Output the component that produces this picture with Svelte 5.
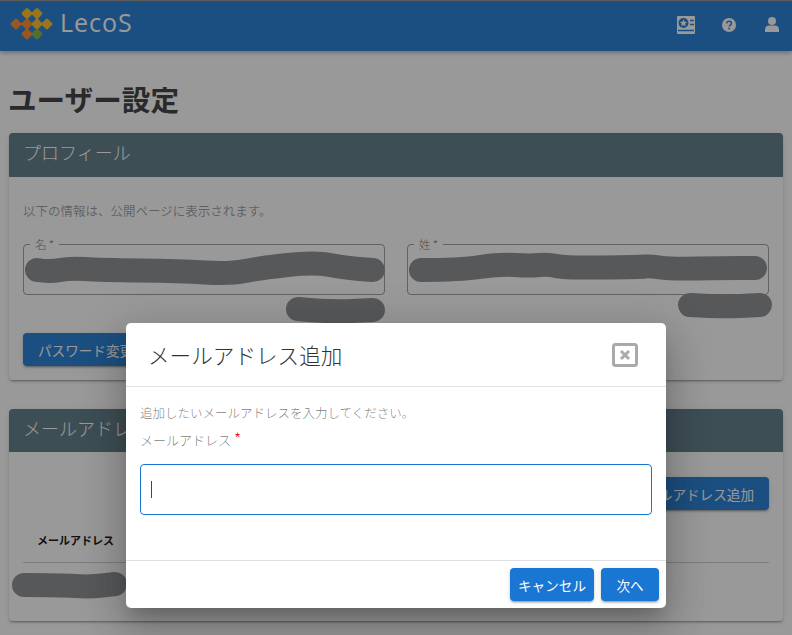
<script>
  let email = $state('');

  const logoDots = [
    { x: 16, y: 23, fill: '#ff8420' },
    { x: 27, y: 23, fill: '#ff8420' },
    { x: 27, y: 33, fill: '#ff8420' },
    { x: 27, y: 12.5, fill: '#ffbc1c' },
    { x: 37, y: 12.5, fill: '#ffbc1c' },
    { x: 37, y: 23, fill: '#ffbc1c' },
    { x: 47, y: 23, fill: '#ffbc1c' },
    { x: 37, y: 33, fill: '#7fb03c' }
  ];

  const scribbles = [
    [[37, 270], [50, 272], [70, 268], [100, 270], [180, 271], [230, 274], [260, 268], [315, 262], [345, 268], [373, 270]],
    [[421, 270], [460, 270], [500, 264], [530, 266], [548, 264], [565, 268], [640, 267], [650, 266], [670, 269], [725, 268], [755, 268]],
    [[298, 309], [330, 312], [373, 310]],
    [[690, 305], [720, 307], [760, 305]],
    [[24, 585], [60, 585], [90, 587], [115, 584]]
  ];

  // rounds the corners of a redaction stroke with midpoint quadratics
  function smooth(pts) {
    let d = `M${pts[0][0]} ${pts[0][1]}`;
    for (let i = 1; i < pts.length - 1; i++) {
      const mx = (pts[i][0] + pts[i + 1][0]) / 2;
      const my = (pts[i][1] + pts[i + 1][1]) / 2;
      d += ` Q${pts[i][0]} ${pts[i][1]} ${mx} ${my}`;
    }
    const last = pts[pts.length - 1];
    return `${d} L${last[0]} ${last[1]}`;
  }
</script>

<div class="page">
  <header class="topbar">
    <div class="brand">
      <svg class="logo" width="56" height="50" viewBox="0 0 56 50">
        <path d="M16 23H27V33" fill="none" stroke="#ff8420" stroke-width="2.5" />
        <path d="M27 12.5H37V23H47" fill="none" stroke="#ffbc1c" stroke-width="2.5" />
        {#each logoDots as d}
          <rect x={d.x - 4.3} y={d.y - 4.3} width="8.6" height="8.6" rx="1.5" fill={d.fill} transform={`rotate(45 ${d.x} ${d.y})`} />
        {/each}
      </svg>
      <span class="brand-name">LecoS</span>
    </div>
    <nav class="nav-icons">
      <svg class="icon-card" width="18" height="18" viewBox="0 0 18 18">
        <rect width="18" height="18" rx="1" fill="#fff" />
        <circle cx="6.5" cy="7" r="5" fill="#1976d2" />
        <path d="M6.5 3.4l1 2.4 2.6.2-2 1.7.6 2.500-2.200-1.300-2.200 1.300.6-2.500-2-1.700 2.600-.2z" fill="#fff" />
        <path d="M13 4.5h4M13 8.5h4M1 14.5h16" stroke="#1976d2" stroke-width="1.3" />
      </svg>
      <svg class="icon-help" width="14" height="14" viewBox="0 0 14 14">
        <circle cx="7" cy="7" r="7" fill="#fff" />
        <path d="M4.7 5.4C4.8 4 5.8 3.2 7.1 3.2c1.3 0 2.3.8 2.3 2 0 1-.6 1.5-1.2 1.9-.6.4-.9.7-.9 1.4" fill="none" stroke="#1976d2" stroke-width="1.6" />
        <circle cx="7.2" cy="10.5" r="1" fill="#1976d2" />
      </svg>
      <svg class="icon-user" width="14" height="15" viewBox="0 0 14 15">
        <circle cx="7" cy="4" r="4" fill="#fff" />
        <path d="M0 15v-2.500C0 10 2 8.500 4 8.500h6c2 0 4 1.500 4 4V15z" fill="#fff" />
      </svg>
    </nav>
  </header>

  <main class="content">
    <h1>ユーザー設定</h1>

    <section class="card profile">
      <h2>プロフィール</h2>
      <div class="card-body">
        <p class="lead">以下の情報は、公開ページに表示されます。</p>
        <div class="fields">
          <fieldset>
            <legend>名 <span class="req">*</span></legend>
          </fieldset>
          <fieldset>
            <legend>姓 <span class="req">*</span></legend>
          </fieldset>
        </div>
        <button class="btn pw">パスワード変更</button>
      </div>
    </section>

    <section class="card mail">
      <h2>メールアドレス</h2>
      <div class="card-body">
        <div class="actions">
          <button class="btn">メールアドレス追加</button>
        </div>
        <div class="table-head">メールアドレス</div>
      </div>
    </section>
  </main>

  <svg class="redactions" width="792" height="635" viewBox="0 0 792 635">
    {#each scribbles as pts}
      <path d={smooth(pts)} fill="none" stroke="#868789" stroke-width="24" stroke-linecap="round" stroke-linejoin="round" />
    {/each}
  </svg>

  <div class="overlay">
    <div class="dialog">
      <div class="dialog-head">
        <span class="dialog-title">メールアドレス追加</span>
        <svg width="26" height="24" viewBox="0 0 26 24">
          <rect x="1.5" y="1.5" width="23" height="21" rx="2" fill="none" stroke="#aaa" stroke-width="3" />
          <path d="M9 8l8 8M17 8l-8 8" stroke="#aaa" stroke-width="3" />
        </svg>
      </div>
      <div class="dialog-body">
        <p class="hint">追加したいメールアドレスを入力してください。</p>
        <label for="email">メールアドレス <span class="star">*</span></label>
        <div class="input-wrap">
          <input id="email" type="text" bind:value={email} />
          <span class="caret"></span>
        </div>
      </div>
      <div class="dialog-foot">
        <button class="btn primary">キャンセル</button>
        <button class="btn primary next">次へ</button>
      </div>
    </div>
  </div>
</div>

<style>
  :global(body) {
    overflow: hidden;
    font-family: "Noto Sans CJK JP", "Noto Sans", sans-serif;
  }

  .page {
    position: relative;
    height: 635px;
    overflow: hidden;
    background: #fff;
    color: rgba(0, 0, 0, 0.87);
  }

  .topbar {
    height: 51px;
    box-sizing: border-box;
    display: flex;
    align-items: center;
    justify-content: space-between;
    border-top: 1px solid #8f8f8f;
    background: #1976d2;
    box-shadow: 0 2px 4px rgba(0, 0, 0, 0.3);
  }

  .brand {
    display: flex;
    align-items: center;
  }

  .logo {
    display: block;
    margin-top: -1px;
  }

  .brand-name {
    font-family: "Open Sans", sans-serif;
    font-size: 25px;
    font-weight: 400;
    line-height: 34px;
    color: #fff;
    margin-left: 4px;
    padding-bottom: 8px;
    letter-spacing: 1px;
  }

  .nav-icons {
    display: flex;
    align-items: center;
    margin-right: 13px;
    padding-bottom: 3px;
  }

  .icon-help {
    margin-left: 27px;
  }

  .icon-user {
    margin-left: 29px;
  }

  .content {
    padding: 0 9px;
  }

  h1 {
    margin: 0 0 0 -1px;
    padding-top: 28px;
    height: 54px;
    font-size: 28.6px;
    line-height: 40px;
    font-weight: 700;
    color: #333;
  }

  .card {
    background: #fff;
    border-radius: 4px;
    box-shadow: 0 3px 1px -2px rgba(0, 0, 0, 0.2), 0 2px 2px rgba(0, 0, 0, 0.14), 0 1px 5px rgba(0, 0, 0, 0.12);
  }

  .card h2 {
    margin: 0;
    height: 44px;
    padding-left: 14px;
    line-height: 39px;
    font-size: 18px;
    font-weight: 300;
    color: #fff;
    background: #587582;
    border-radius: 4px 4px 0 0;
  }

  .card-body {
    padding: 0 14px;
  }

  .profile {
    height: 247px;
    margin-bottom: 29px;
  }

  .mail {
    height: 212px;
  }

  .mail h2 {
    height: 43px;
  }

  .lead {
    margin: 0;
    padding-top: 25px;
    height: 35px;
    font-size: 12.5px;
    line-height: 18px;
    color: rgba(0, 0, 0, 0.42);
  }

  .fields {
    display: grid;
    grid-template-columns: 362px 362px;
    gap: 22px;
  }

  fieldset {
    margin: 0;
    padding: 0 0 0 6px;
    height: 58px;
    box-sizing: border-box;
    border: 1px solid rgba(0, 0, 0, 0.4);
    border-radius: 4px;
  }

  legend {
    padding: 0 5px;
    font-size: 11.5px;
    font-weight: 300;
    line-height: 14px;
    color: rgba(0, 0, 0, 0.6);
  }

  .req {
    color: #e53935;
  }

  .btn {
    height: 33px;
    padding: 0 15px;
    border: 0;
    border-radius: 4px;
    font-family: inherit;
    font-size: 13.6px;
    font-weight: 400;
    color: #fff;
    background: #1976d2;
    box-shadow: 0 3px 1px -2px rgba(0, 0, 0, 0.2), 0 2px 2px rgba(0, 0, 0, 0.14), 0 1px 5px rgba(0, 0, 0, 0.12);
  }

  .pw {
    margin-top: 38px;
    display: block;
  }

  .actions {
    display: flex;
    justify-content: flex-end;
    padding-top: 25px;
  }

  .table-head {
    margin-top: 17px;
    height: 35px;
    padding-left: 14px;
    border-bottom: 1px solid rgba(0, 0, 0, 0.2);
    font-size: 11px;
    font-weight: 700;
    line-height: 26px;
    color: #000;
  }

  .redactions {
    position: absolute;
    top: 0;
    left: 0;
  }

  .overlay {
    position: absolute;
    inset: 0;
    display: flex;
    justify-content: center;
    align-items: flex-start;
    padding-top: 323px;
    background: rgba(33, 33, 33, 0.46);
  }

  .dialog {
    width: 540px;
    height: 285px;
    display: flex;
    flex-direction: column;
    background: #fff;
    border-radius: 5px;
    box-shadow: 0 11px 15px -7px rgba(0, 0, 0, 0.2), 0 24px 38px 3px rgba(0, 0, 0, 0.14), 0 9px 46px 8px rgba(0, 0, 0, 0.12);
  }

  .dialog-head {
    height: 63px;
    flex: none;
    display: flex;
    align-items: center;
    justify-content: space-between;
    padding: 0 28px 0 22px;
    border-bottom: 1px solid #e0e0e0;
  }

  .dialog-title {
    font-size: 21.6px;
    font-weight: 300;
    color: #333;
  }

  .dialog-body {
    flex: 1;
    padding: 0 14px;
  }

  .hint {
    margin: 0;
    padding-top: 17px;
    font-size: 12.5px;
    font-weight: 300;
    line-height: 18px;
    color: rgba(0, 0, 0, 0.54);
  }

  label {
    display: block;
    margin-top: 8px;
    font-size: 13px;
    font-weight: 300;
    line-height: 20px;
    color: rgba(0, 0, 0, 0.54);
  }

  .star {
    font-size: 16px;
    line-height: 0;
    color: #f00;
  }

  .input-wrap {
    position: relative;
    margin-top: 14px;
  }

  input {
    display: block;
    width: 100%;
    height: 51px;
    box-sizing: border-box;
    padding: 0 10px;
    border: 1px solid #1976d2;
    border-radius: 4px;
    outline: none;
    background: #fff;
  }

  .caret {
    position: absolute;
    left: 11px;
    top: 17px;
    width: 1px;
    height: 17px;
    background: #1f4f80;
  }

  .dialog-foot {
    height: 48px;
    flex: none;
    display: flex;
    justify-content: flex-end;
    gap: 7px;
    padding: 7px 7px 0 0;
    box-sizing: border-box;
    border-top: 1px solid #e0e0e0;
  }

  .primary {
    width: 84px;
    padding: 0;
  }

  .next {
    width: 58px;
  }
</style>
